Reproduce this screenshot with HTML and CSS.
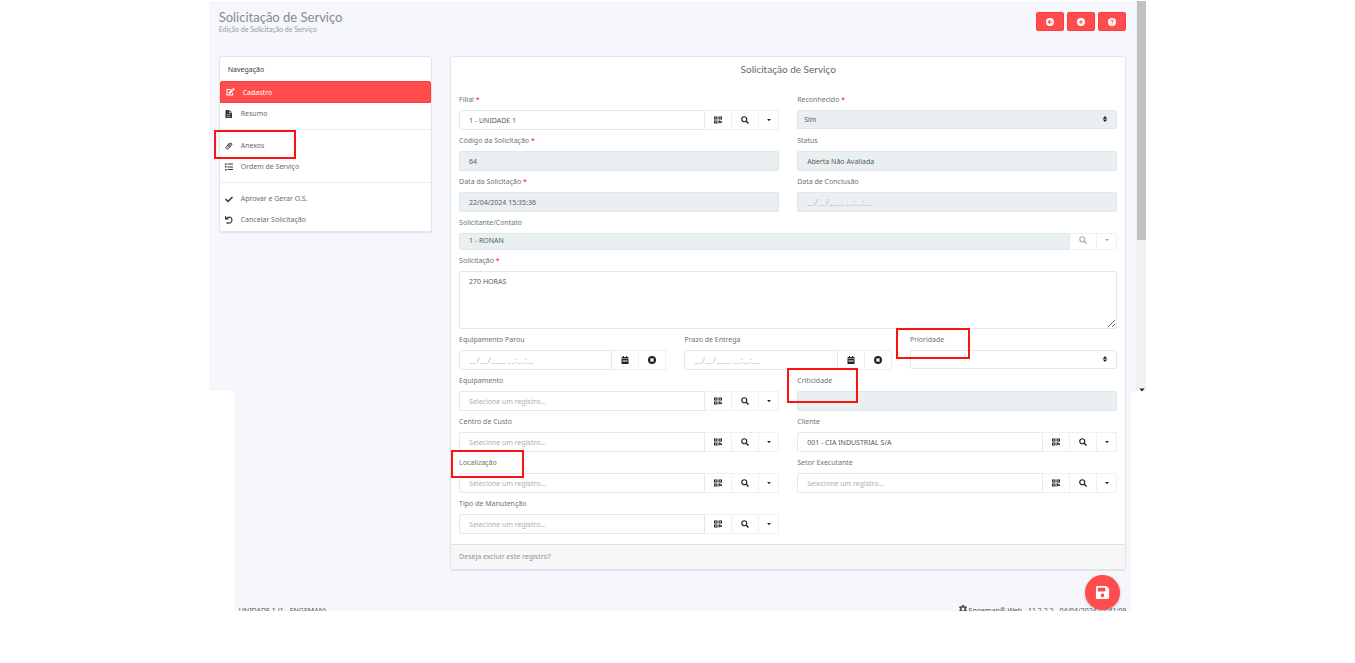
FILE: index.html
```html
<!DOCTYPE html>
<html lang="pt-BR">
<head>
<meta charset="utf-8">
<title>Solicitação de Serviço</title>
<link rel="stylesheet" href="styles.css">
</head>
<body>
<svg class="sprite" aria-hidden="true">
  <symbol id="qr" viewBox="0 0 16 16"><path fill-rule="evenodd" d="M0 1h7v6H0zM2 3v2h3V3zM9 1h7v6H9zM11 3v2h3V3zM0 9h7v6H0zM2 11v2h3v-2zM9 9h4v2h3v3h-3v-1h-2v2H9z"/></symbol>
  <symbol id="search" viewBox="0 0 16 16"><path d="M10.500 10.500L15 15" stroke="currentColor" stroke-width="3"/><circle cx="6.500" cy="6.500" r="5" fill="none" stroke="currentColor" stroke-width="2.400"/></symbol>
  <symbol id="caret" viewBox="0 0 16 16"><path d="M3 5h10l-5 6z"/></symbol>
  <symbol id="sort" viewBox="0 0 16 16"><path d="M2 7l6-7 6 7zM2 9h12l-6 7z"/></symbol>
  <symbol id="calendar" viewBox="0 0 16 16"><path fill-rule="evenodd" d="M1 2h3V0h2v2h4V0h2v2h3v3H1zM1 6h14v10H1zM3 8v1h10V8zM3 11v1h10v-1z"/></symbol>
  <symbol id="clear" viewBox="0 0 16 16"><path fill-rule="evenodd" d="M8 0a8 8 0 1 0 0 16A8 8 0 0 0 8 0zM6 4l2 2 2-2 2 2-2 2 2 2-2 2-2-2-2 2-2-2 2-2-2-2z"/></symbol>
  <symbol id="back" viewBox="0 0 16 16"><path fill-rule="evenodd" d="M8 0a8 8 0 1 0 0 16A8 8 0 0 0 8 0zM8 3l1 1.500L7 7h6v2H7l2 2.500L8 13 3 8z"/></symbol>
  <symbol id="plus" viewBox="0 0 16 16"><path fill-rule="evenodd" d="M8 0a8 8 0 1 0 0 16A8 8 0 0 0 8 0zM7 4h2v3h3v2H9v3H7V9H4V7h3z"/></symbol>
  <symbol id="help" viewBox="0 0 16 16"><circle cx="8" cy="8" r="8"/><path d="M5.500 6.500C5.500 3 10.500 3 10.500 6c0 2-2.500 1.500-2.500 4M8 11v2" fill="none" stroke="#ff4d4d" stroke-width="2"/></symbol>
  <symbol id="edit" viewBox="0 0 18 16"><path d="M9 3H2v11h11v-4" fill="none" stroke="currentColor" stroke-width="2.200"/><path d="M6 8l6-6 3 3-6 6-4 1zM13 1l1-1h1l3 3-2 2z"/></symbol>
  <symbol id="file" viewBox="0 0 16 16"><path fill-rule="evenodd" d="M1 0h7v6h6v10H1zM4 9v1h7V9zM4 12v1h7v-1z"/><path d="M9 0l5 5H9z"/></symbol>
  <symbol id="clip" viewBox="0 0 16 16"><path d="M4 9l6-6c2-2 5 1 3 3l-6 7c-3 3-7-1-4-4l6-7M6 11l5-6" fill="none" stroke="currentColor" stroke-width="2"/></symbol>
  <symbol id="list" viewBox="0 0 16 16"><path d="M0 1h3v3H0zM5 1h11v2H5zM0 6h3v3H0zM5 7h11v2H5zM0 12h3v3H0zM5 12h11v2H5z"/></symbol>
  <symbol id="check" viewBox="0 0 16 16"><path d="M1 8l5 5L15 4" fill="none" stroke="currentColor" stroke-width="3"/></symbol>
  <symbol id="undo" viewBox="0 0 16 16"><path d="M3 5C7 0 14 2 14 8S7 16 3 13" fill="none" stroke="currentColor" stroke-width="2.400"/><path d="M0 0h2l1 4h4v3H0z"/></symbol>
  <symbol id="gear" viewBox="0 0 16 16"><path fill-rule="evenodd" d="M6 0h4v2l2 1 2-1 2 3-2 2v2l2 2-2 3-2-1-2 1v2H6v-2l-2-1-2 1-2-3 2-2V7L0 5l2-3 2 1 2-1zM8 5a3 3 0 1 0 0 6 3 3 0 0 0 0-6z"/></symbol>
  <symbol id="save" viewBox="0 0 16 16"><path fill-rule="evenodd" d="M2 1h10l3 3v9q0 2-2 2H2q-1 0-1-2V3q0-2 1-2zM3 3v4h8V3zM8 9a2 2 0 1 0 0 4 2 2 0 0 0 0-4z"/></symbol>
</svg>
<div class="app">
  <header class="page-header">
    <div>
      <h1 class="page-title">Solicitação de Serviço</h1>
      <p class="page-subtitle">Edição de Solicitação de Serviço</p>
    </div>
    <div class="actions">
      <button class="action" aria-label="Voltar"><svg><use href="#back"/></svg></button>
      <button class="action" aria-label="Novo"><svg><use href="#plus"/></svg></button>
      <button class="action" aria-label="Ajuda"><svg><use href="#help"/></svg></button>
    </div>
  </header>

  <div class="columns">
    <nav class="sidebar">
      <h2 class="sidebar-title">Navegação</h2>
      <a class="nav-item active" href="#cadastro"><svg><use href="#edit"/></svg>Cadastro</a>
      <a class="nav-item" href="#resumo"><svg><use href="#file"/></svg>Resumo</a>
      <hr class="separator">
      <a class="nav-item" href="#anexos"><svg><use href="#clip"/></svg>Anexos<span class="mark mark-anexos"></span></a>
      <a class="nav-item" href="#ordem"><svg><use href="#list"/></svg>Ordem de Serviço</a>
      <hr class="separator">
      <a class="nav-item" href="#aprovar"><svg><use href="#check"/></svg>Aprovar e Gerar O.S.</a>
      <a class="nav-item" href="#cancelar"><svg><use href="#undo"/></svg>Cancelar Solicitação</a>
    </nav>

    <main class="panel">
      <h2 class="panel-title">Solicitação de Serviço</h2>
      <form class="form">
        <div class="field half">
          <label for="filial">Filial <b>*</b></label>
          <div class="group"><input id="filial" value="1 - UNIDADE 1"><button type="button" class="add" aria-label="QR"><svg><use href="#qr"/></svg></button><button type="button" class="add" aria-label="Pesquisar"><svg><use href="#search"/></svg></button><button type="button" class="add slim" aria-label="Opções"><svg><use href="#caret"/></svg></button></div>
        </div>
        <div class="field half">
          <label for="reconhecido">Reconhecido <b>*</b></label>
          <div class="select"><select id="reconhecido" disabled><option>Sim</option></select><svg><use href="#sort"/></svg></div>
        </div>
        <div class="field half">
          <label for="codigo">Código da Solicitação <b>*</b></label>
          <input id="codigo" value="64" disabled>
        </div>
        <div class="field half">
          <label for="status">Status</label>
          <input id="status" value="Aberta Não Avaliada" disabled>
        </div>
        <div class="field half">
          <label for="data">Data da Solicitação <b>*</b></label>
          <input id="data" value="22/04/2024 15:35:36" disabled>
        </div>
        <div class="field half">
          <label for="conclusao">Data de Conclusão</label>
          <input id="conclusao" class="date" placeholder="__/__/____ __:__:__" disabled>
        </div>
        <div class="field full">
          <label for="contato">Solicitante/Contato</label>
          <div class="group short"><input id="contato" value="1 - RONAN" disabled><button type="button" class="add" aria-label="Pesquisar" disabled><svg><use href="#search"/></svg></button><button type="button" class="add slim" aria-label="Opções" disabled><svg><use href="#caret"/></svg></button></div>
        </div>
        <div class="field full">
          <label for="solicitacao">Solicitação <b>*</b></label>
          <textarea id="solicitacao">270 HORAS</textarea>
        </div>
        <div class="field third">
          <label for="parou">Equipamento Parou</label>
          <div class="group"><input id="parou" class="date" placeholder="__/__/____ __:__:__"><button type="button" class="add" aria-label="Calendário"><svg><use href="#calendar"/></svg></button><button type="button" class="add" aria-label="Limpar"><svg><use href="#clear"/></svg></button></div>
        </div>
        <div class="field third">
          <label for="prazo">Prazo de Entrega</label>
          <div class="group"><input id="prazo" class="date" placeholder="__/__/____ __:__:__"><button type="button" class="add" aria-label="Calendário"><svg><use href="#calendar"/></svg></button><button type="button" class="add" aria-label="Limpar"><svg><use href="#clear"/></svg></button></div>
        </div>
        <div class="field third">
          <label for="prioridade">Prioridade</label>
          <div class="select"><select id="prioridade"><option></option></select><svg><use href="#sort"/></svg></div>
          <span class="mark mark-prioridade"></span>
        </div>
        <div class="field half">
          <label for="equipamento">Equipamento</label>
          <div class="group"><input id="equipamento" placeholder="Selecione um registro..."><button type="button" class="add" aria-label="QR"><svg><use href="#qr"/></svg></button><button type="button" class="add" aria-label="Pesquisar"><svg><use href="#search"/></svg></button><button type="button" class="add slim" aria-label="Opções"><svg><use href="#caret"/></svg></button></div>
        </div>
        <div class="field half">
          <label for="criticidade">Criticidade</label>
          <input id="criticidade" disabled>
          <span class="mark mark-criticidade"></span>
        </div>
        <div class="field half">
          <label for="centro">Centro de Custo</label>
          <div class="group"><input id="centro" placeholder="Selecione um registro..."><button type="button" class="add" aria-label="QR"><svg><use href="#qr"/></svg></button><button type="button" class="add" aria-label="Pesquisar"><svg><use href="#search"/></svg></button><button type="button" class="add slim" aria-label="Opções"><svg><use href="#caret"/></svg></button></div>
        </div>
        <div class="field half">
          <label for="cliente">Cliente</label>
          <div class="group"><input id="cliente" value="001 - CIA INDUSTRIAL S/A"><button type="button" class="add" aria-label="QR"><svg><use href="#qr"/></svg></button><button type="button" class="add" aria-label="Pesquisar"><svg><use href="#search"/></svg></button><button type="button" class="add slim" aria-label="Opções"><svg><use href="#caret"/></svg></button></div>
        </div>
        <div class="field half">
          <label for="localizacao">Localização</label>
          <div class="group"><input id="localizacao" placeholder="Selecione um registro..."><button type="button" class="add" aria-label="QR"><svg><use href="#qr"/></svg></button><button type="button" class="add" aria-label="Pesquisar"><svg><use href="#search"/></svg></button><button type="button" class="add slim" aria-label="Opções"><svg><use href="#caret"/></svg></button></div>
          <span class="mark mark-localizacao"></span>
        </div>
        <div class="field half">
          <label for="setor">Setor Executante</label>
          <div class="group"><input id="setor" placeholder="Selecione um registro..."><button type="button" class="add" aria-label="QR"><svg><use href="#qr"/></svg></button><button type="button" class="add" aria-label="Pesquisar"><svg><use href="#search"/></svg></button><button type="button" class="add slim" aria-label="Opções"><svg><use href="#caret"/></svg></button></div>
        </div>
        <div class="field half">
          <label for="tipo">Tipo de Manutenção</label>
          <div class="group"><input id="tipo" placeholder="Selecione um registro..."><button type="button" class="add" aria-label="QR"><svg><use href="#qr"/></svg></button><button type="button" class="add" aria-label="Pesquisar"><svg><use href="#search"/></svg></button><button type="button" class="add slim" aria-label="Opções"><svg><use href="#caret"/></svg></button></div>
        </div>
      </form>
      <div class="panel-footer"><a href="#excluir">Deseja excluir este registro?</a></div>
    </main>
  </div>

  <footer class="page-footer">
    <span>- UNIDADE 1 (1 - ENGEMAN)</span>
    <span class="version"><svg><use href="#gear"/></svg>Engeman® Web - 11.2.2.2 - 04/04/2024 11:41:09</span>
  </footer>
  <button class="save" aria-label="Salvar"><svg><use href="#save"/></svg></button>
  <div class="scrollbar"><span class="thumb"></span><svg><use href="#caret"/></svg></div>
</div>
</body>
</html>
```
FILE: styles.css
```css
* { box-sizing: border-box; }
body {
  margin: 0;
  padding-top: 1px;
  background: #fff;
  color: #6c7377;
  font: 7px/11px "Noto Sans", sans-serif;
}
h1, h2, p { margin: 0; font-weight: 400; }
a { color: inherit; text-decoration: none; }
button, input, select, textarea { font: inherit; color: inherit; margin: 0; }
svg { width: 8px; height: 8px; fill: currentColor; flex: none; }
.sprite { position: absolute; width: 0; height: 0; }

.app {
  position: relative;
  width: 69.2%;
  margin: 0 auto;
  padding: 0 20px 0 10px;
  background:
    linear-gradient(#f5f7fc, #f5f7fc) 0 0 / 100% 390px no-repeat,
    linear-gradient(#f5f7fc, #f5f7fc) 26px 0 / calc(100% - 41px) 100% no-repeat;
}
.page-header {
  display: flex;
  justify-content: space-between;
  align-items: flex-start;
  padding: 9px 0 23px;
}
.page-title { font-family: Lato, sans-serif; font-size: 13px; line-height: 15px; color: #868b8e; }
.page-subtitle { font-family: Lato, sans-serif; font-size: 7px; line-height: 8px; color: #8ba0a8; }
.actions { display: flex; gap: 3px; padding-top: 2px; }
.action {
  display: grid;
  place-items: center;
  width: 28px;
  height: 19px;
  padding: 0;
  border: 1px solid #ff3b3b;
  border-radius: 2px;
  background: #ff4d4d;
  color: #fff;
}

.columns { display: grid; grid-template-columns: repeat(12, minmax(0, 1fr)); gap: 18px; align-items: start; }
.sidebar, .panel { border: 1px solid #e1e6ea; border-radius: 3px; background: #fff; box-shadow: 0 1px 1px #dde2e6; }
.sidebar { grid-column: span 3; padding-bottom: 1px; }
.panel { grid-column: span 9; }
.sidebar-title { padding: 7px 8px 6px; font-size: 7px; line-height: 11px; color: #353c40; }
.nav-item { position: relative; display: flex; align-items: center; gap: 8px; height: 21px; padding: 0 5px; color: #666d71; }
.nav-item svg { color: #30363a; }
.nav-item.active { height: 22px; background: #ff4d4d; color: #fff; border: 1px solid #ff3b3b; border-radius: 2px 2px 0 0; }
.nav-item.active svg { color: #fff; width: 9px; }
.separator { margin: 5px 0; border: 0; border-top: 1px solid #e8ecee; }

.panel-title { padding: 5px 8px; font-family: Lato, sans-serif; font-size: 10px; line-height: 14px; text-align: center; color: #62696d; }
.form { display: grid; grid-template-columns: repeat(12, minmax(0, 1fr)); gap: 5px 18px; padding: 13px 8px 10px; }
.field { position: relative; display: flex; flex-direction: column; gap: 5px; min-width: 0; }
.half { grid-column: span 6; }
.third { grid-column: span 4; }
.full { grid-column: span 12; }
.field label { height: 11px; }
.field b { color: #f00; font-weight: 400; }
input, select, textarea {
  width: 100%;
  min-width: 0;
  height: 20px;
  padding: 0 9px;
  border: 1px solid #dfebef;
  border-radius: 2px;
  background: #fff;
  color: #555d61;
  outline: 0;
}
input:disabled, select:disabled { background: #eaf0f1; color: #555d61; opacity: 1; border-color: #dce8eb; }
::placeholder { color: #a9afb8; opacity: 1; }
.date { font-family: Lato, sans-serif; font-size: 8px; }
textarea { display: block; height: 58px; padding: 4px 9px; resize: vertical; }
.select { position: relative; }
select { display: block; height: 19px; padding: 0 6px; appearance: none; }
.select svg { position: absolute; right: 9px; top: 6px; width: 6px; height: 6px; color: #222; }
.group { display: flex; height: 20px; }
.group input { flex: 1; width: 0; height: auto; border-radius: 2px 0 0 2px; }
.add { display: grid; place-items: center; flex: none; width: 27px; padding: 0; border: 1px solid #edf1f3; border-left-width: 0; background: #fff; color: #1f2427; }
.add.slim { width: 20px; }
.add.slim svg { width: 6px; height: 6px; }
.add:disabled { color: #a9adb0; }
.short { height: 17px; }
.short input { padding-bottom: 3px; }
.short .add { padding-bottom: 4px; }
.panel-footer { padding: 6px 8px 7px; border-top: 1px solid #dfe3e4; background: #f7f7f7; color: #87979b; }

.mark { position: absolute; border: 2px solid #fd1212; pointer-events: none; z-index: 1; }
.mark-anexos { left: -6px; top: -5px; width: 82px; height: 29px; }
.mark-prioridade { left: -14px; top: -6px; width: 74px; height: 31px; }
.mark-criticidade { left: -10px; top: -7px; width: 71px; height: 35px; }
.mark-localizacao { left: -8px; top: -7px; width: 73px; height: 28px; }

.page-footer { display: flex; justify-content: space-between; height: 41px; padding: 35px 0 0 16px; overflow: hidden; color: #4d5356; }
.version { display: flex; gap: 2px; }
.save {
  position: absolute;
  right: 26px;
  bottom: 1px;
  display: grid;
  place-items: center;
  width: 35px;
  height: 35px;
  padding: 0;
  border: 0;
  border-radius: 50%;
  background: #ff4d4d;
  color: #fff;
  box-shadow: 0 1px 3px #8888;
}
.save svg { width: 15px; height: 15px; }
.scrollbar { position: absolute; right: 0; top: 0; width: 10px; height: 390px; background: #f1f1f1; }
.thumb { position: absolute; right: 0; top: 0; width: 9px; height: 239px; background: #c1c1c1; }
.scrollbar svg { position: absolute; right: 0; bottom: -3px; color: #222; }
```
